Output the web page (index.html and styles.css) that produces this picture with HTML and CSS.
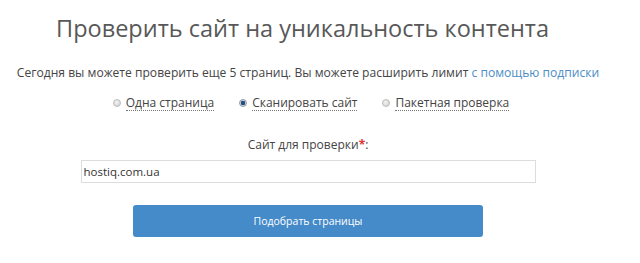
FILE: index.html
```html
<!DOCTYPE html>
<html lang="ru">
<head>
  <meta charset="UTF-8">
  <title>Проверить сайт на уникальность контента</title>
  <link rel="stylesheet" href="styles.css">
</head>
<body>

  <div class="page">
    <h1 class="title">Проверить сайт на уникальность контента</h1>

    <p class="limit">Сегодня вы можете проверить еще 5 страниц. Вы можете расширить лимит <a href="#">с помощью подписки</a></p>

    <div class="modes">
      <label class="mode"><input type="radio" name="mode"> <span>Одна страница</span></label>
      <label class="mode"><input type="radio" name="mode" checked> <span>Сканировать сайт</span></label>
      <label class="mode"><input type="radio" name="mode"> <span>Пакетная проверка</span></label>
    </div>

    <div class="field">
      <label class="field-label" for="site">Сайт для проверки<b>*</b>:</label>
      <input type="text" id="site" value="hostiq.com.ua">
    </div>

    <div class="actions">
      <button type="button">Подобрать страницы</button>
    </div>
  </div>

</body>
</html>
```

FILE: styles.css
```css
body {
  font-family: "Open Sans", Arial, sans-serif;
  color: #444;
  margin: 0;
  background: #fff;
}

.page {
  width: 616px;
}

.title {
  font-size: 23.5px;
  font-weight: normal;
  color: #585858;
  text-align: center;
  margin: 12px 0 0;
  padding-right: 11px;
  line-height: 32px;
}

.limit {
  font-size: 12.1px;
  text-align: center;
  margin: 20px 0 0;
  line-height: 18px;
  color: #444;
}

.limit a {
  color: #4b8dc6;
  text-decoration: none;
}

.modes {
  display: flex;
  justify-content: center;
  gap: 25px;
  margin-top: 13px;
  padding-left: 6px;
  font-size: 12px;
  line-height: 18px;
}

.mode {
  display: flex;
  align-items: center;
  gap: 5px;
  color: #444;
  cursor: pointer;
}

.mode input {
  appearance: none;
  margin: 0;
  width: 8px;
  height: 8px;
  border-radius: 50%;
  border: 1px solid #bbb;
  background: radial-gradient(circle at 40% 35%, #f2f2f2, #cfcfcf);
  box-sizing: border-box;
}

.mode input:checked {
  border-color: #8a9bb0;
  background: radial-gradient(circle, #2c4f78 0, #2c4f78 2px, #c9d3dd 2.5px);
}

.mode span {
  border-bottom: 1px dotted #777;
  line-height: 15px;
}

.field {
  width: 455px;
  margin: 25px auto 0;
  display: flex;
  flex-direction: column;
  align-items: center;
}

.field-label {
  font-size: 12px;
  line-height: 18px;
  color: #444;
  margin-bottom: 6px;
}

.field-label b {
  color: #d33;
  font-weight: bold;
}

.field input {
  width: 100%;
  box-sizing: border-box;
  height: 23px;
  border: 1px solid #ddd;
  padding: 0 2px;
  font-family: "Open Sans", Arial, sans-serif;
  font-size: 11.5px;
  color: #333;
}

.actions {
  display: flex;
  justify-content: center;
  margin-top: 22px;
}

.actions button {
  width: 350px;
  height: 32px;
  background: #458ac9;
  border: none;
  border-radius: 3px;
  color: #fff;
  font-family: "Open Sans", Arial, sans-serif;
  font-size: 10.5px;
  cursor: pointer;
}
```
